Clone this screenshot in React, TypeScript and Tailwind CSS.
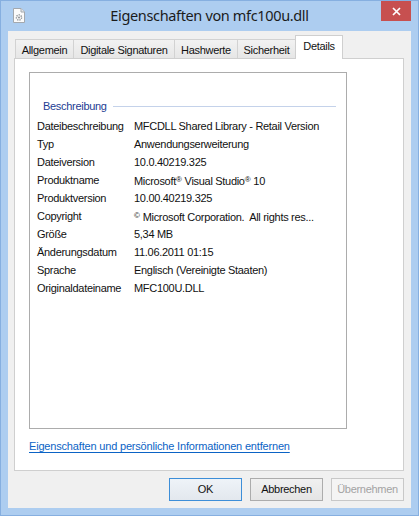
import React from "react";

const body = { fontFamily: '"Liberation Sans", Arial, sans-serif' };

type Row = { label: string; value: React.ReactNode };

const Reg = () => <span className="text-[8px] align-[3px] tracking-normal">®</span>;
const Copy = () => <span className="text-[8px] align-[3px] tracking-normal">©</span>;

const rows: Row[] = [
  { label: "Dateibeschreibung", value: "MFCDLL Shared Library - Retail Version" },
  { label: "Typ", value: "Anwendungserweiterung" },
  { label: "Dateiversion", value: "10.0.40219.325" },
  {
    label: "Produktname",
    value: (
      <>
        Microsoft<Reg /> Visual Studio<Reg /> 10
      </>
    ),
  },
  { label: "Produktversion", value: "10.00.40219.325" },
  {
    label: "Copyright",
    value: (
      <>
        <Copy /> Microsoft Corporation.&nbsp; All rights res...
      </>
    ),
  },
  { label: "Größe", value: "5,34 MB" },
  { label: "Änderungsdatum", value: "11.06.2011 01:15" },
  { label: "Sprache", value: "Englisch (Vereinigte Staaten)" },
  { label: "Originaldateiname", value: "MFC100U.DLL" },
];

function FileIcon() {
  return (
    <svg width="12" height="15" viewBox="0 0 12 15">
      <path d="M0.5 0.5H8L11.5 4V14.5H0.5Z" fill="#fbfbfb" stroke="#a3a8ae" />
      <path d="M8 0.5V4H11.5" fill="#e4e6e9" stroke="#a3a8ae" />
      <circle cx="6" cy="9.5" r="2.6" fill="none" stroke="#8c9196" strokeWidth="1.4" strokeDasharray="1.3 1" />
      <circle cx="6" cy="9.5" r="1" fill="#8c9196" />
    </svg>
  );
}

function CloseGlyph() {
  return (
    <svg width="9" height="9" viewBox="0 0 9 9">
      <path d="M1 1L8 8M8 1L1 8" stroke="#ffffff" strokeWidth="1.7" />
    </svg>
  );
}

type Tab = { label: string; w: string; active?: boolean };

const tabs: Tab[] = [
  { label: "Allgemein", w: "w-[59px]" },
  { label: "Digitale Signaturen", w: "w-[102px]" },
  { label: "Hashwerte", w: "w-[64px]" },
  { label: "Sicherheit", w: "w-[59px]" },
  { label: "Details", w: "w-[48px]", active: true },
];

export default function App() {
  return (
    <div
      className="w-[419px] h-[516px] bg-[#adcdf0] border border-[#86afe0] flex flex-col text-[11px] tracking-[-0.3px] text-[#111]"
      style={body}
    >
      {/* title bar */}
      <div className="h-[30px] grid grid-cols-[1fr_auto_1fr] items-start">
        <div className="pl-[12px] pt-[7px]">
          <FileIcon />
        </div>
        <div
          className="mt-[4px] leading-[20px] text-[14.5px] tracking-[-0.35px] text-[#1b1b1b]"
          style={{ fontFamily: '"Noto Sans", "Open Sans", sans-serif' }}
        >
          Eigenschaften von mfc100u.dll
        </div>
        <div className="flex justify-end pr-[7px]">
          <div className="w-[30px] h-[20px] bg-[#c75050] flex items-center justify-center">
            <CloseGlyph />
          </div>
        </div>
      </div>

      {/* client area */}
      <div className="flex-1 mx-[7px] mb-[7px] bg-[#f0f0f0] flex flex-col">
        {/* tab strip */}
        <div className="mt-[4px] ml-[7px] h-[23px] flex items-end">
          {tabs.map((t, i) =>
            t.active ? (
              <div
                key={t.label}
                className={`${t.w} -ml-px h-[24px] -mb-px relative z-10 bg-white border border-b-0 border-[#cfcfcf] flex justify-center pt-[3px] leading-[14px]`}
              >
                {t.label}
              </div>
            ) : (
              <div
                key={t.label}
                className={`${t.w} ${i === 0 ? "" : "-ml-px"} h-[19px] bg-gradient-to-b from-[#f2f2f2] to-[#e6e6e6] border border-b-0 border-[#d2d2d2] flex justify-center pt-[3px] leading-[14px]`}
              >
                {t.label}
              </div>
            )
          )}
        </div>

        {/* tab page */}
        <div className="ml-[6px] mr-[7px] h-[413px] bg-white border border-[#cfcfcf] px-[14px] pt-[13px] flex flex-col">
          <div className="w-[318px] h-[357px] border border-[#acacac] bg-white pt-[24px] flex flex-col">
            <div className="h-[18px] flex items-center pl-[13px] pr-[10px] text-[#1d3c93]">
              <span>Beschreibung</span>
              <div className="flex-1 h-px bg-[#c4d2ea] ml-[6px]" />
            </div>
            <div className="mt-[2px] flex flex-col pl-[7px]">
              {rows.map((r) => (
                <div key={r.label} className="h-[18px] leading-[18px] grid grid-cols-[97px_1fr] whitespace-nowrap">
                  <span>{r.label}</span>
                  <span>{r.value}</span>
                </div>
              ))}
            </div>
          </div>
          <div className="mt-[11px] leading-[13px] tracking-[-0.18px] text-[#0b63c5] underline underline-offset-[2px]">
            Eigenschaften und persönliche Informationen entfernen
          </div>
        </div>

        {/* dialog buttons */}
        <div className="mt-[7px] mr-[7px] flex justify-end gap-[8px]">
          <div className="w-[73px] h-[23px] border border-[#3d8ed8] bg-gradient-to-b from-[#eef3f8] to-[#e3e8ee] flex items-center justify-center">
            OK
          </div>
          <div className="w-[73px] h-[23px] border border-[#acacac] bg-gradient-to-b from-[#f0f0f0] to-[#e5e5e5] flex items-center justify-center">
            Abbrechen
          </div>
          <div className="w-[73px] h-[23px] border border-[#c8c8c8] bg-[#f4f4f4] text-[#a3a3a3] flex items-center justify-center">
            Übernehmen
          </div>
        </div>
      </div>
    </div>
  );
}
